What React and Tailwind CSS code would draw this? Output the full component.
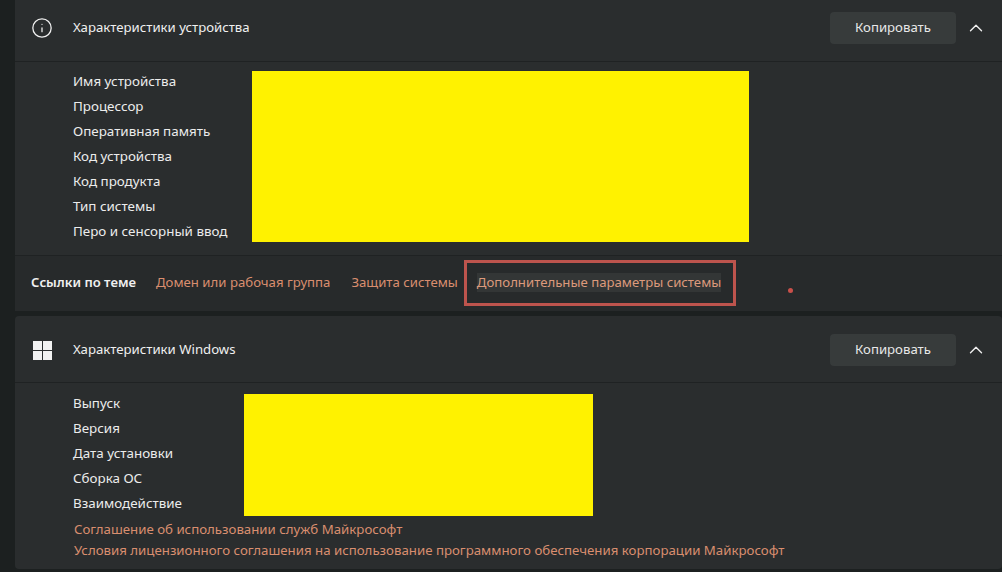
import React from 'react';
import { Info, ChevronUp } from 'lucide-react';

const font = "font-['Noto_Sans','Open_Sans',sans-serif]";

const WindowsLogo = () => (
  <svg width="19" height="19" viewBox="0 0 19 19" fill="#f2f2f2">
    <rect x="0" y="0" width="9" height="9" />
    <rect x="10" y="0" width="9" height="9" />
    <rect x="0" y="10" width="9" height="9" />
    <rect x="10" y="10" width="9" height="9" />
  </svg>
);

const CardHeader = ({ icon, title, boxClass }) => (
  <div className={`flex items-center border-b border-[#1f2223] pl-[18px] pr-[15px] ${boxClass}`}>
    <div className="flex w-[40px] justify-start">{icon}</div>
    <div className="text-[13.2px] text-[#f0f0f0]">{title}</div>
    <button className="ml-auto h-[32px] w-[126px] rounded-[4px] bg-[#373b3b] text-[13.2px] text-[#e8e8e8]">
      Копировать
    </button>
    <ChevronUp className="ml-[9px] h-[22px] w-[22px] text-[#f0f0f0]" strokeWidth={1.5} />
  </div>
);

const Specs = ({ rows, labelWidth, yellowClass, pad }) => (
  <div className={`flex pl-[58px] ${pad}`}>
    <div className={labelWidth}>
      {rows.map(r => (
        <div key={r} className="h-[25px] text-[13.4px] leading-[25px] text-[#ececec]">{r}</div>
      ))}
    </div>
    <div className={`bg-[#fff200] ${yellowClass}`} />
  </div>
);

export default function App() {
  return (
    <div className={`h-[572px] w-[1002px] overflow-hidden bg-[#1c2020] pl-[15px] ${font}`}>
      <section className="h-[311px] rounded-b-[4px] bg-[#2a2d2e]">
        <CardHeader
          icon={<Info className="ml-[-2px] h-[22px] w-[22px] text-[#f0f0f0]" strokeWidth={1.4} />}
          title="Характеристики устройства"
          boxClass="h-[62px] pb-[5px]"
        />
        <Specs
          rows={['Имя устройства', 'Процессор', 'Оперативная память', 'Код устройства', 'Код продукта', 'Тип системы', 'Перо и сенсорный ввод']}
          labelWidth="w-[179px]"
          yellowClass="mt-[2px] h-[171px] w-[497px]"
          pad="pt-[7px]"
        />
        <div className="relative mt-[11px] flex h-[56px] items-center border-t border-[#1f2223] bg-[#272a2b] pb-[2px] pl-[16px] text-[13.2px]">
          <span className="text-[13.1px] font-semibold text-[#f0f0f0]">Ссылки по теме</span>
          <a className="ml-[20px] text-[#d98e6f]">Домен или рабочая группа</a>
          <a className="ml-[21px] text-[#d98e6f]">Защита системы</a>
          <a className="ml-[6px] flex h-[46px] w-[272px] items-center border-[3px] border-[#bd544d] pl-[10px] text-[#dc9a7c]">
            <span className="bg-[#333636] leading-[19px]">Дополнительные параметры системы</span>
          </a>
          {/* red dot left on the screenshot */}
          <div className="absolute left-[773px] top-[32px] h-[5px] w-[5px] rounded-full bg-[#c9504a]" />
        </div>
      </section>
      <section className="mt-[5px] h-[253px] rounded-[4px] bg-[#2a2d2e]">
        <CardHeader icon={<WindowsLogo />} title="Характеристики Windows" boxClass="h-[67px] pt-[2px]" />
        <Specs
          rows={['Выпуск', 'Версия', 'Дата установки', 'Сборка ОС', 'Взаимодействие']}
          labelWidth="w-[171px]"
          yellowClass="mt-[3px] h-[122px] w-[349px]"
          pad="pt-[8px]"
        />
        <div className="pl-[59px] pt-[3px] text-[13.25px] leading-[21px] text-[#d98e6f]">
          <div>Соглашение об использовании служб Майкрософт</div>
          <div>Условия лицензионного соглашения на использование программного обеспечения корпорации Майкрософт</div>
        </div>
      </section>
    </div>
  );
}
